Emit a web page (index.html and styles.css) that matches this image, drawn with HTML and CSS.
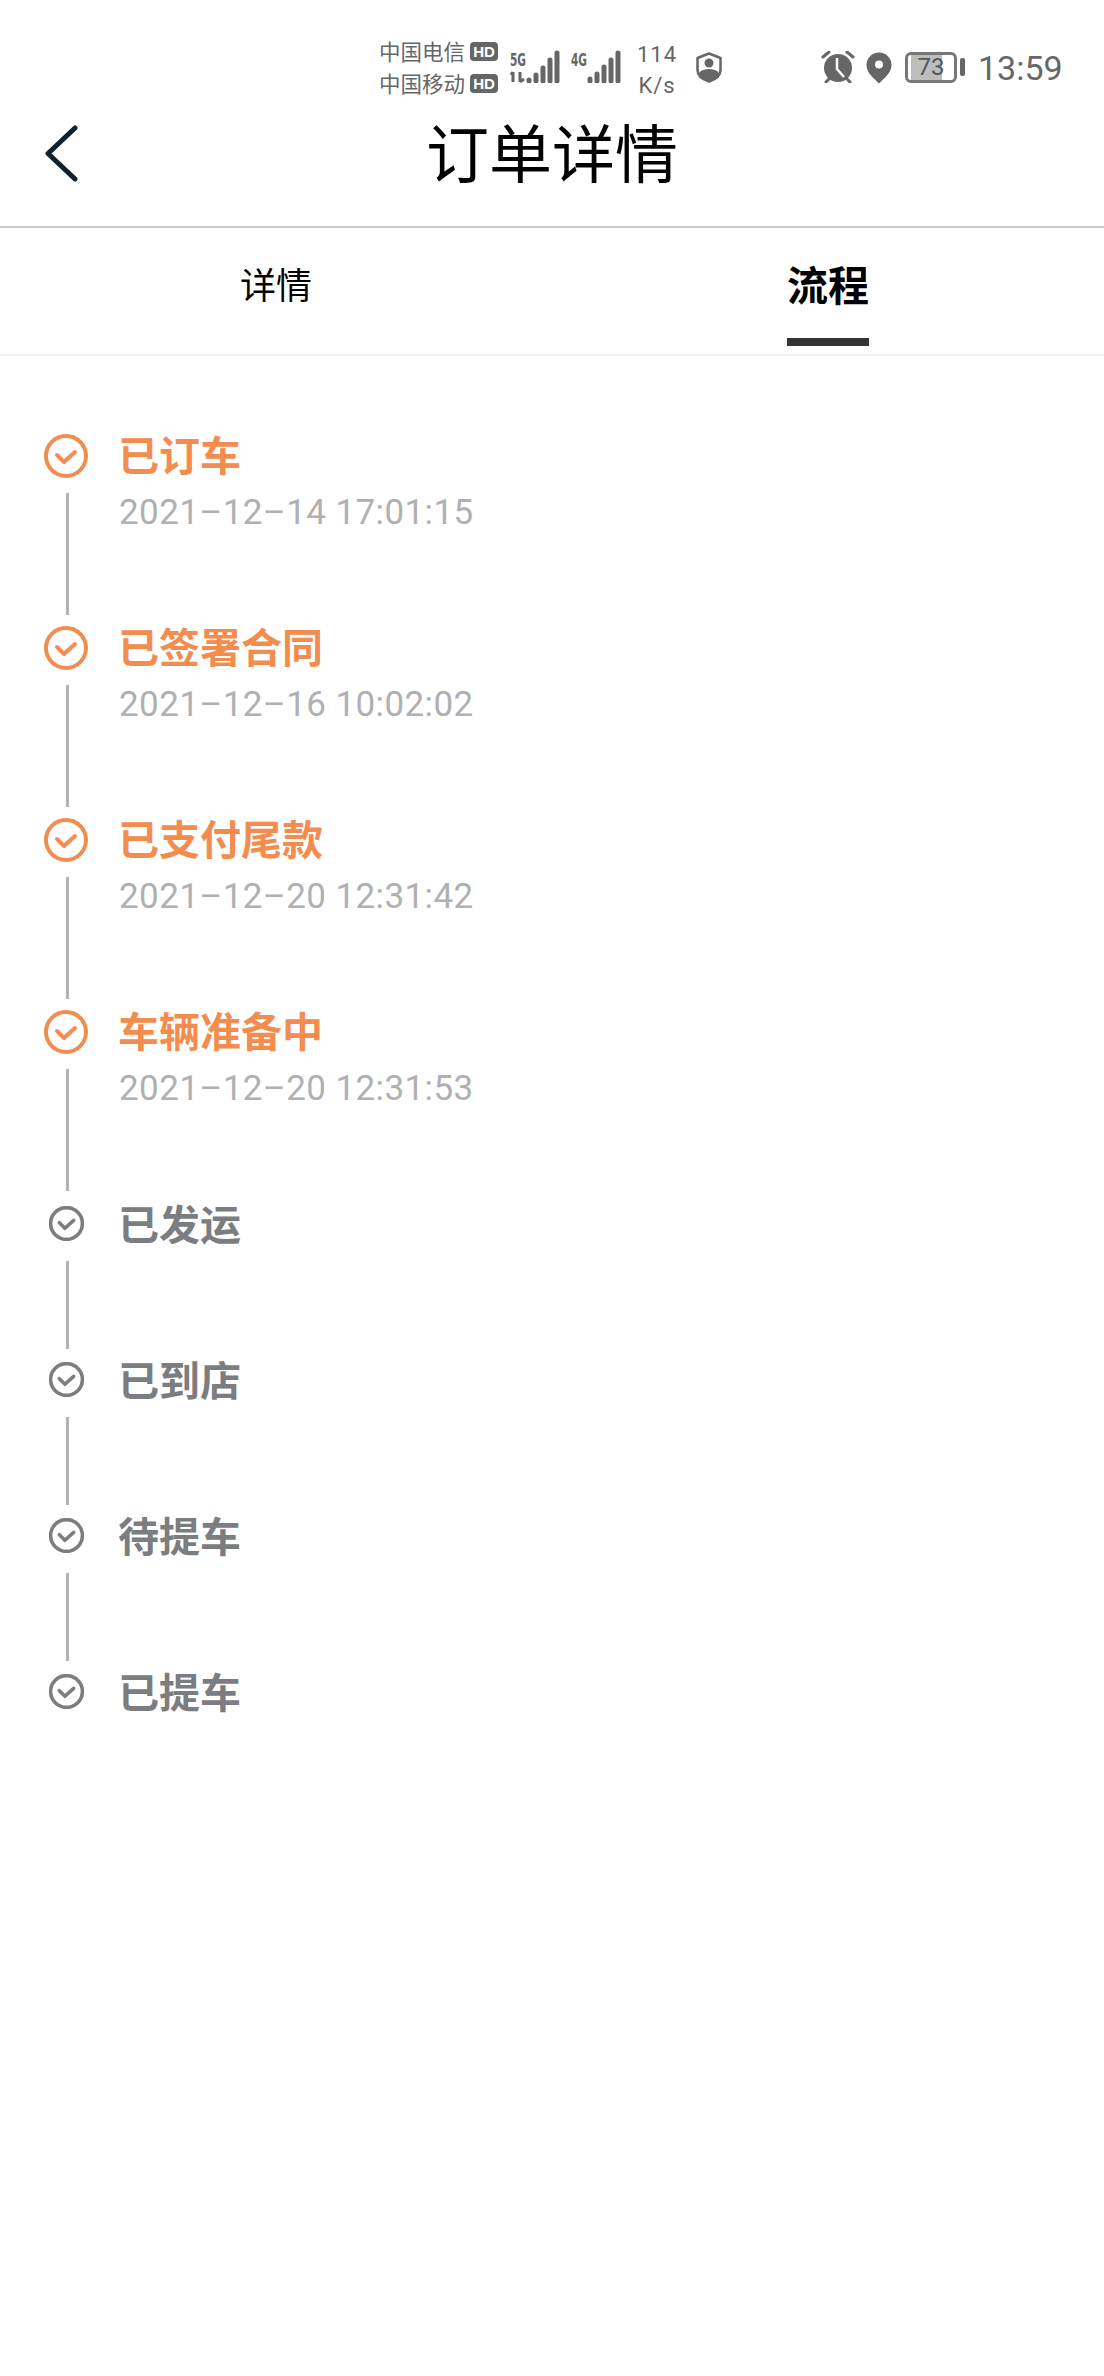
FILE: index.html
```html
<!DOCTYPE html>
<html lang="zh-CN">
<head>
	<meta charset="UTF-8">
	<title>订单详情</title>
	<link rel="stylesheet" href="styles.css">
</head>
<body>
	<div class="status">
		<div class="carriers">
			<div class="carrier">中国电信<span class="hd">HD</span></div>
			<div class="carrier">中国移动<span class="hd">HD</span></div>
		</div>
		<svg class="sig sig5" width="50" height="38" viewBox="0 -6 50 38">
			<text x="0" y="15" class="sig-label" textLength="16" lengthAdjust="spacingAndGlyphs">5G</text>
			<path d="M3 31V21M1 24l2-3M10 21v10M10 31l4-3" class="sig-arrow"/>
			<path d="M19 29v1M26 24v6M33 17v13M40 9v21M47 2v28" class="sig-bars"/>
		</svg>
		<svg class="sig sig4" width="50" height="38" viewBox="0 -6 50 38">
			<text x="0" y="15" class="sig-label" textLength="16" lengthAdjust="spacingAndGlyphs">4G</text>
			<path d="M19 28v2M26 23v7M33 16v14M40 9v21M47 2v28" class="sig-bars"/>
		</svg>
		<div class="speed"><div>114</div><div>K/s</div></div>
		<svg class="shield" width="26" height="31" viewBox="0 0 26 31">
			<path d="M13 1.500L24.500 6v12c0 5.500-5 9.500-11.500 11.500C6.500 27.500 1.500 23.500 1.500 18V6z" fill="#fff" stroke="#666" stroke-width="2.500" stroke-linejoin="round"/>
			<circle cx="13" cy="11" r="4.500" fill="#666"/>
			<path d="M3 21c2-3 6-4 10-4s8 1 10 4c-1 3.500-5 6.500-10 8.500C8 27.500 4 24.500 3 21z" fill="#666"/>
		</svg>
		<svg class="alarm" width="34" height="32" viewBox="0 0 34 32">
			<circle cx="17" cy="17" r="14" fill="#666"/>
			<path d="M2 6l6-5M32 6l-6-5M8 28l-3 3M26 28l3 3" stroke="#666" stroke-width="3" fill="none" stroke-linecap="round"/>
			<path d="M16 7v11l7 8" stroke="#fff" stroke-width="2.500" fill="none"/>
		</svg>
		<svg class="pin" width="26" height="32" viewBox="0 0 26 32">
			<path d="M13 0.500C6 0.500 0.500 6 0.500 13c0 8 8 14 12.500 18.500C17.500 27 25.500 21 25.500 13 25.500 6 20 0.500 13 0.500z" fill="#666"/>
			<circle cx="13" cy="12.500" r="4" fill="#fff"/>
		</svg>
		<div class="battery"><div class="battery-box">73</div><div class="battery-tip"></div></div>
		<div class="clock">13:59</div>
	</div>

	<div class="nav">
		<svg class="back" width="36" height="60" viewBox="0 0 36 60">
			<path d="M30 4L3 29.500 30 55" fill="none" stroke="#0f2030" stroke-width="5" stroke-linecap="round" stroke-linejoin="round"/>
		</svg>
		<div class="title">订单详情</div>
	</div>

	<div class="tabs">
		<div class="tab"><span class="tab-text">详情</span></div>
		<div class="tab on"><span class="tab-text">流程</span></div>
	</div>

	<ul class="steps">
		<li class="step done">
			<div class="mark">
				<svg class="ico" viewBox="0 0 44 44"><circle cx="22" cy="22" r="20"/><path d="M13 21l7 7 11-10"/></svg>
				<div class="line"></div>
			</div>
			<div class="info">
				<div class="name">已订车</div>
				<div class="time">2021–12–14 17:01:15</div>
			</div>
		</li>
		<li class="step done">
			<div class="mark">
				<svg class="ico" viewBox="0 0 44 44"><circle cx="22" cy="22" r="20"/><path d="M13 21l7 7 11-10"/></svg>
				<div class="line"></div>
			</div>
			<div class="info">
				<div class="name">已签署合同</div>
				<div class="time">2021–12–16 10:02:02</div>
			</div>
		</li>
		<li class="step done">
			<div class="mark">
				<svg class="ico" viewBox="0 0 44 44"><circle cx="22" cy="22" r="20"/><path d="M13 21l7 7 11-10"/></svg>
				<div class="line"></div>
			</div>
			<div class="info">
				<div class="name">已支付尾款</div>
				<div class="time">2021–12–20 12:31:42</div>
			</div>
		</li>
		<li class="step done">
			<div class="mark">
				<svg class="ico" viewBox="0 0 44 44"><circle cx="22" cy="22" r="20"/><path d="M13 21l7 7 11-10"/></svg>
				<div class="line"></div>
			</div>
			<div class="info">
				<div class="name">车辆准备中</div>
				<div class="time">2021–12–20 12:31:53</div>
			</div>
		</li>
		<li class="step todo">
			<div class="mark">
				<svg class="ico" viewBox="0 0 44 44"><circle cx="22" cy="22" r="20"/><path d="M13 21l7 7 11-10"/></svg>
				<div class="line"></div>
			</div>
			<div class="info"><div class="name">已发运</div></div>
		</li>
		<li class="step todo">
			<div class="mark">
				<svg class="ico" viewBox="0 0 44 44"><circle cx="22" cy="22" r="20"/><path d="M13 21l7 7 11-10"/></svg>
				<div class="line"></div>
			</div>
			<div class="info"><div class="name">已到店</div></div>
		</li>
		<li class="step todo">
			<div class="mark">
				<svg class="ico" viewBox="0 0 44 44"><circle cx="22" cy="22" r="20"/><path d="M13 21l7 7 11-10"/></svg>
				<div class="line"></div>
			</div>
			<div class="info"><div class="name">待提车</div></div>
		</li>
		<li class="step todo last">
			<div class="mark">
				<svg class="ico" viewBox="0 0 44 44"><circle cx="22" cy="22" r="20"/><path d="M13 21l7 7 11-10"/></svg>
			</div>
			<div class="info"><div class="name">已提车</div></div>
		</li>
	</ul>
</body>
</html>
```

FILE: styles.css
```css
*{
	margin: 0;
	padding: 0;
	box-sizing: border-box;
}
body{
	width: 1104px;
	height: 2376px;
	background-color: #fff;
	font-family: "Noto Sans CJK SC", "Noto Sans", sans-serif;
	overflow: hidden;
}

/* status bar */
.status{
	height: 100px;
	padding: 35px 0 0 379px;
	display: flex;
	align-items: flex-start;
	color: #666;
}
.carriers{
	width: 120px;
}
.carrier{
	display: flex;
	align-items: center;
	height: 32px;
	font-size: 21.500px;
	line-height: 32px;
}
.hd{
	width: 28px;
	height: 19px;
	margin-left: 5px;
	border-radius: 4px;
	background-color: #666;
	color: #fff;
	font: bold 15px/19px "Liberation Sans", sans-serif;
	text-align: center;
}
.sig{
	margin-top: 10px;
	flex: none;
}
.sig5{
	margin-left: 11px;
}
.sig4{
	margin-left: 11px;
}
.sig-label{
	font: bold 18px "DejaVu Sans", sans-serif;
	fill: #666;
}
.sig-bars{
	fill: none;
	stroke: #666;
	stroke-width: 5;
	stroke-linecap: round;
}
.sig-arrow{
	fill: none;
	stroke: #666;
	stroke-width: 3;
}
.speed{
	width: 50px;
	margin-left: 11px;
	padding-top: 4px;
	font: 22px/31px Roboto, sans-serif;
	text-align: center;
	letter-spacing: 1px;
}
.shield{
	margin: 17px 0 0 14px;
	flex: none;
}
.alarm{
	margin: 16px 0 0 99px;
	flex: none;
}
.pin{
	margin: 17px 0 0 11px;
	flex: none;
}
.battery{
	display: flex;
	align-items: center;
	height: 32px;
	margin: 16px 0 0 13px;
}
.battery-box{
	width: 52px;
	height: 31px;
	border: 3px solid #777;
	border-radius: 6px;
	background: linear-gradient(to right, #fff 3px, #bdbdbd 3px, #bdbdbd 34px, #fff 34px);
	font: 24px/25px Roboto, sans-serif;
	text-align: center;
	color: #555;
}
.battery-tip{
	width: 5px;
	height: 18px;
	margin-left: 3px;
	border-radius: 2px;
	background-color: #666;
}
.clock{
	margin: 13px 0 0 13px;
	font: 34px/40px Roboto, sans-serif;
	color: #666;
}

/* title */
.nav{
	height: 128px;
	border-bottom: 2px solid #c8c8c8;
	display: grid;
	grid-template-columns: 1fr auto 1fr;
	align-items: center;
}
.back{
	grid-column: 1;
	grid-row: 1;
	margin: -18px 0 0 45px;
}
.title{
	grid-column: 2;
	grid-row: 1;
	font-size: 63px;
	line-height: 90px;
	color: #000;
	margin-top: -26px;
}

/* tabs */
.tabs{
	display: flex;
	height: 128px;
	border-bottom: 2px solid #f0f0f0;
}
.tab{
	flex: 1;
	display: flex;
	justify-content: center;
	color: #000;
	font-size: 36px;
}
.tab-text{
	height: 118px;
	line-height: 110px;
}
.on .tab-text{
	font-size: 41px;
	font-weight: 700;
	border-bottom: 8px solid #333;
}

/* timeline */
.steps{
	list-style: none;
	padding: 78px 0 0 44px;
}
.step{
	display: flex;
}
.mark{
	width: 44px;
	display: flex;
	flex-direction: column;
	align-items: center;
}
.ico{
	display: block;
	fill: none;
	stroke-width: 4;
	stroke-linecap: round;
	stroke-linejoin: round;
}
.line{
	width: 3px;
	margin-left: 3px;
	background-color: #b2b2b2;
}
.info{
	margin-left: 33px;
}
.name{
	font-size: 41px;
	font-weight: 700;
	line-height: 44px;
	margin-top: -3px;
	margin-left: -3px;
}
.time{
	margin-top: 16px;
	margin-left: -2px;
	font: 35px/44px Roboto, sans-serif;
	letter-spacing: 0.400px;
	color: #aeb0b3;
}
.done{
	height: 192px;
}
.done .ico{
	width: 44px;
	height: 44px;
	stroke: #f38c4f;
}
.done .line{
	height: 122px;
	margin-top: 15px;
}
.done .name{
	color: #f38c4f;
}
.todo{
	height: 156px;
}
.done + .todo{
	margin-top: 4px;
}
.todo .ico{
	width: 35px;
	height: 35px;
	stroke: #7b7d81;
	stroke-width: 4.500;
}
.todo .line{
	height: 88px;
	margin-top: 20px;
}
.todo .name{
	color: #7b7d81;
	margin-top: -6px;
}
```
